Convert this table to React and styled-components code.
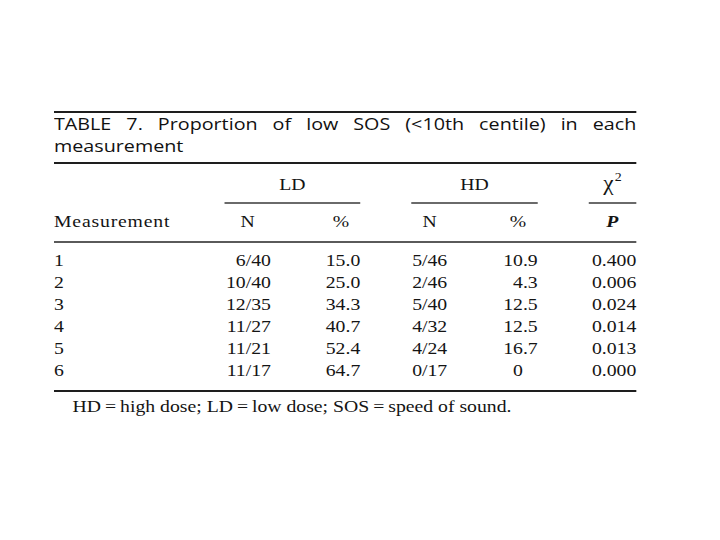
import React from 'react';
import styled, { createGlobalStyle } from 'styled-components';

const Global = createGlobalStyle`
    html, body { margin:0; padding:0; background:#fff; }
`;

const rows = [
    ['1', '6/40', '15.0', '5/46', '10.9', '0.400'],
    ['2', '10/40', '25.0', '2/46', '4.3', '0.006'],
    ['3', '12/35', '34.3', '5/40', '12.5', '0.024'],
    ['4', '11/27', '40.7', '4/32', '12.5', '0.014'],
    ['5', '11/21', '52.4', '4/24', '16.7', '0.013'],
    ['6', '11/17', '64.7', '0/17', '0', '0.000'],
];

const App = () => {
    return (
        <Page>
            <Global />
            {/* la imagen original esta estirada a lo ancho */}
            <Figure>
                <Title>TABLE 7. Proportion of low SOS (&lt;10th centile) in each measurement</Title>

                <SpanRow>
                    <span />
                    <Group>LD</Group>
                    <Group $offset>HD</Group>
                    <Group $offset $narrow><Chi>χ</Chi><Sup>2</Sup></Group>
                </SpanRow>

                <HeadRow>
                    <Cell $spaced>Measurement</Cell>
                    <Cell $align="center">N</Cell>
                    <Cell $align="right" $pad={9.5}>%</Cell>
                    <Cell $align="right" $pad={9}>N</Cell>
                    <Cell $align="right" $pad={10}>%</Cell>
                    <Cell $align="right" $pad={15.5}><Italic>P</Italic></Cell>
                </HeadRow>

                <Body>
                    {rows.map((r) => (
                        <Row key={r[0]}>
                            <Cell>{r[0]}</Cell>
                            <Cell $align="right">{r[1]}</Cell>
                            <Cell $align="right">{r[2]}</Cell>
                            <Cell $align="right">{r[3]}</Cell>
                            <Cell $align="right" $pad={r[4].includes('.') ? 0 : 12.75}>{r[4]}</Cell>
                            <Cell $align="right">{r[5]}</Cell>
                        </Row>
                    ))}
                </Body>

                <Note>HD{'\u2009'}={'\u2009'}high dose; LD{'\u2009'}={'\u2009'}low dose; SOS{'\u2009'}={'\u2009'}speed of sound.</Note>
            </Figure>
        </Page>
    );
};

export default App;

const Page = styled.div`
    width:720px;
    height:540px;
    background:#fff;
    overflow:hidden;
    padding-top:111px;
    box-sizing:border-box;
`;

const Figure = styled.div`
    width:502px;
    margin-left:54px;
    transform:scaleX(1.16);
    transform-origin:0 0;
    color:#141414;
    font-family:'Liberation Serif', 'Times New Roman', serif;
    font-size:17px;
    line-height:22px;
`;

const Title = styled.div`
    border-top:2px solid #1e1e1e;
    border-bottom:2px solid #1e1e1e;
    padding-bottom:5px;
    font-family:'Open Sans', 'DejaVu Sans', sans-serif;
    font-size:17px;
    line-height:22px;
    text-align:justify;
    color:#111;
`;

const Row = styled.div`
    display:grid;
    grid-template-columns:147px 40px 77px 75px 78px 85px;
`;

const SpanRow = styled(Row)`
    margin-top:10px;
`;

const Group = styled.div`
    grid-column:span ${p => p.$narrow ? 1 : 2};
    margin-left:${p => p.$offset ? 44 : 0}px;
    height:22px;
    text-align:center;
    padding-bottom:6px;
    border-bottom:2px solid #6a6a6a;
`;

const Chi = styled.span`
    font-size:20px;
    line-height:0;
`;

const Sup = styled.sup`
    font-size:12px;
    line-height:0;
    margin-left:1px;
    position:relative;
    top:-2px;
`;

const HeadRow = styled(Row)`
    margin-top:7px;
    padding-bottom:8px;
    border-bottom:2px solid #5a5a5a;
`;

const Cell = styled.div`
    text-align:${p => p.$align || 'left'};
    padding-right:${p => p.$pad || 0}px;
    letter-spacing:${p => p.$spaced ? '0.7px' : 'normal'};
    white-space:nowrap;
`;

const Italic = styled.span`
    font-style:italic;
    font-weight:700;
`;

const Body = styled.div`
    padding-top:7px;
    padding-bottom:8px;
    border-bottom:2px solid #1e1e1e;
`;

const Note = styled.div`
    margin-top:4px;
    padding-left:16px;
`;
